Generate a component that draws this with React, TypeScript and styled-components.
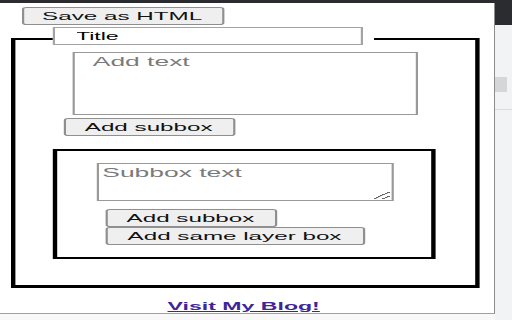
import React from 'react';
import styled, { createGlobalStyle } from 'styled-components';

// the screenshot is stretched sideways: layout is written at native size,
// then the whole popup body is scaled by STRETCH on x only
const STRETCH = 2.2;

const GlobalStyle = createGlobalStyle`
  html, body {
    margin: 0;
    padding: 0;
    width: 512px;
    height: 320px;
    overflow: hidden;
    background: #f8f8f8;
  }
  body {
    font-family: "Liberation Sans", Arial, sans-serif;
  }
  * {
    box-sizing: border-box;
  }
`;

const Screen = styled.div`
  display: flex;
  width: 512px;
  height: 320px;
`;

const PopupColumn = styled.div`
  width: 495px;
  display: flex;
  flex-direction: column;
`;

const TopBand = styled.div`
  height: 3px;
  background: #2b2c30;
`;

const Popup = styled.div`
  height: 311px;
  background: #fff;
  border-right: 1px solid #8d8d8d;
  border-bottom: 1px solid #a0a0a0;
  overflow: hidden;
`;

const Below = styled.div`
  flex: 1;
  background: #f8f8f8;
`;

const SideStrip = styled.div`
  flex: 1;
  display: flex;
  flex-direction: column;
  background: #f1f3f4;
`;

const SideDark = styled.div`
  height: 25px;
  background: #2b2c30;
`;

const SideTab = styled.div`
  margin-top: 52px;
  width: 12px;
  height: 15px;
  background: #d5d6d8;
`;

const SideRule = styled.div`
  margin-top: 17px;
  height: 1px;
  background: #dadce0;
`;

const Stage = styled.div`
  width: ${494 / STRETCH}px;
  padding-top: 4px;
  transform: scaleX(${STRETCH});
  transform-origin: left top;
  font-family: "Liberation Sans", Arial, sans-serif;
`;

const Button = styled.button<{ $w: number; $ml: number; $mt?: number }>`
  display: block;
  width: ${(p) => p.$w}px;
  height: 18px;
  margin: ${(p) => p.$mt ?? 0}px 0 0 ${(p) => p.$ml}px;
  padding: 0;
  background: #efefef;
  border: 1px solid #8f8f8f;
  border-radius: 2px;
  font: 11px "Liberation Sans", Arial, sans-serif;
  color: #111;
  text-align: center;
  white-space: nowrap;
`;

const Box = styled.fieldset`
  margin: 2px 7px 0 5px;
  padding: 0 0 26px 0;
  min-width: 0;
  border: 2px solid #000;
  border-bottom-width: 3px;
`;

const Legend = styled.legend`
  margin-left: 17px;
  padding: 0 4.5px 6px 0;
`;

const TitleInput = styled.input`
  display: block;
  width: 141px;
  height: 18px;
  margin: 0;
  padding: 0 0 0 9.5px;
  border: 1px solid #a3a3a3;
  border-radius: 0;
  background: #fff;
  font: 10.5px "Liberation Sans", Arial, sans-serif;
  color: #000;
`;

const Note = styled.textarea<{ $w: number; $h: number; $ml: number; $mt: number; $px: number; $fixed?: boolean }>`
  display: block;
  width: ${(p) => p.$w}px;
  height: ${(p) => p.$h}px;
  margin: ${(p) => p.$mt}px 0 0 ${(p) => p.$ml}px;
  padding: 2px ${(p) => p.$px}px;
  border: 1px solid #999;
  border-radius: 0;
  font: 12px "Liberation Sans", Arial, sans-serif;
  resize: ${(p) => (p.$fixed ? 'none' : 'both')};

  &::placeholder {
    color: #7a7a7a;
  }
`;

const SubBox = styled.div`
  width: 174px;
  margin: 13px 0 0 17px;
  padding: 12px 0;
  border: 2px solid #000;
`;

const BlogLink = styled.a`
  display: block;
  margin-top: 11px;
  padding-right: 3px;
  text-align: center;
  font: bold 10.5px/14px "Liberation Sans", Arial, sans-serif;
  color: #3f2597;
  text-decoration: underline;
`;

const App = () => {
  return (
    <>
      <GlobalStyle />
      <Screen>
        <PopupColumn>
          <TopBand />
          <Popup>
            <Stage>
              <Button $w={92} $ml={9.5}>Save as HTML</Button>
              <Box>
                <Legend>
                  <TitleInput defaultValue="Title" />
                </Legend>
                <Note $w={157} $h={63} $ml={25.7} $mt={1} $px={8.5} $fixed placeholder="Add text" />
                <Button $w={78} $ml={21.6} $mt={3}>Add subbox</Button>
                <SubBox>
                  <Note $w={135.5} $h={38} $ml={17.5} $mt={0} $px={2} placeholder="Subbox text" />
                  <Button $w={78} $ml={21.6} $mt={8}>Add subbox</Button>
                  <Button $w={118} $ml={21.6}>Add same layer box</Button>
                </SubBox>
              </Box>
              <BlogLink href="#">Visit My Blog!</BlogLink>
            </Stage>
          </Popup>
          <Below />
        </PopupColumn>
        <SideStrip>
          <SideDark />
          <SideTab />
          <SideRule />
        </SideStrip>
      </Screen>
    </>
  );
};

export default App;
